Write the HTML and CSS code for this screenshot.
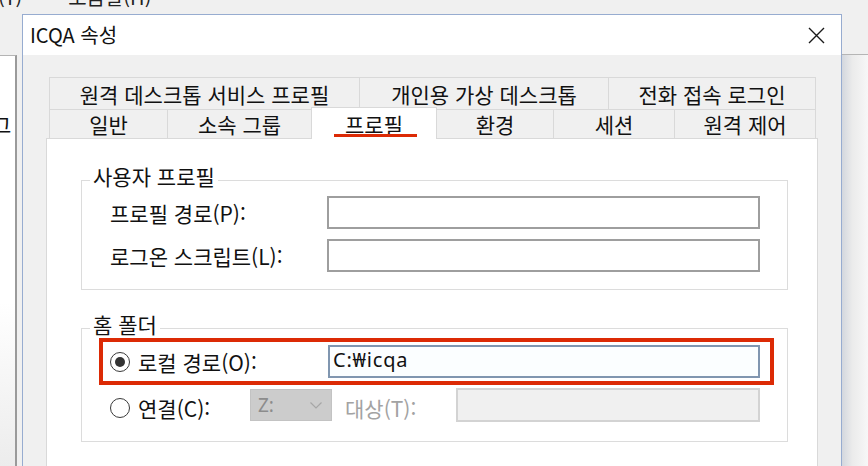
FILE: index.html
```html
<!DOCTYPE html>
<html lang="ko">
<head>
    <meta charset="UTF-8">
    <meta name="viewport" content="width=device-width, initial-scale=1.0">
    <title>ICQA 속성</title>
    <link rel="stylesheet" href="styles.css">
</head>
<body>
    <!-- window behind the dialog -->
    <div class="bg-menu"><span class="bg-item first">(Y)</span><span class="bg-item">도움말(H)</span></div>
    <div class="bg-win"><span class="bg-char">그</span></div>
    <div class="bg-right"></div>

    <div class="dialog">
        <div class="titlebar">
            <span class="title">ICQA 속성</span>
            <svg class="close" width="17" height="17" viewBox="0 0 17 17">
                <path d="M1 1 L16 16 M16 1 L1 16" stroke="#1a1a1a" stroke-width="1.4" fill="none"/>
            </svg>
        </div>
        <div class="dlg-body">
            <div class="tabs">
                <div class="tab-row row-back">
                    <div class="tab">원격 데스크톱 서비스 프로필</div>
                    <div class="tab">개인용 가상 데스크톱</div>
                    <div class="tab">전화 접속 로그인</div>
                </div>
                <div class="tab-row row-front">
                    <div class="tab">일반</div>
                    <div class="tab">소속 그룹</div>
                    <div class="tab active">프로필<span class="mark-line"></span></div>
                    <div class="tab">환경</div>
                    <div class="tab">세션</div>
                    <div class="tab">원격 제어</div>
                </div>
            </div>

            <div class="panel">
                <div class="group group-profile">
                    <span class="legend">사용자 프로필</span>
                    <div class="form-grid">
                        <label class="lbl">프로필 경로(P):</label>
                        <div class="input"></div>
                        <label class="lbl">로그온 스크립트(L):</label>
                        <div class="input"></div>
                    </div>
                </div>

                <div class="group group-home">
                    <span class="legend">홈 폴더</span>
                    <div class="highlight">
                        <div class="radio-item">
                            <span class="radio checked"></span>
                            <span class="lbl">로컬 경로(O):</span>
                        </div>
                        <div class="input focused">C:₩icqa</div>
                    </div>
                    <div class="connect-row">
                        <div class="radio-item connect">
                            <span class="radio"></span>
                            <span class="lbl">연결(C):</span>
                        </div>
                        <div class="combo">
                            <span>Z:</span>
                            <svg width="12" height="7" viewBox="0 0 12 7">
                                <path d="M0.5 0.5 L6 6 L11.5 0.5" stroke="#a6a6a6" stroke-width="1.2" fill="none"/>
                            </svg>
                        </div>
                        <span class="lbl disabled target">대상(T):</span>
                        <div class="input disabled-input"></div>
                    </div>
                </div>
            </div>
        </div>
    </div>
</body>
</html>
```

FILE: styles.css
```css
body {
    margin: 0;
    width: 868px;
    height: 466px;
    overflow: hidden;
    position: relative;
    background: #f0f0f0;
    font-family: "Noto Sans CJK KR", "Noto Sans", sans-serif;
    font-size: 21px;
    color: #111;
}

/* stuff behind the dialog */
.bg-menu {
    position: absolute;
    top: -15px;
    left: 0;
    line-height: 24px;
    font-size: 20px;
    color: #222;
    white-space: nowrap;
}

.bg-item {
    margin-left: 46px;
}

.bg-item.first {
    margin-left: -2px;
}

.bg-win {
    position: absolute;
    left: 0;
    top: 55px;
    width: 15px;
    height: 411px;
    background: linear-gradient(#fff 60%, #ececec);
    border-top: 1px solid #b4b4b4;
    border-right: 2px solid #9a9a9a;
    overflow: hidden;
}

.bg-char {
    position: absolute;
    left: -8px;
    top: 56px;
    line-height: 24px;
}

.bg-right {
    position: absolute;
    left: 842px;
    top: 54px;
    width: 26px;
    height: 412px;
    border-top: 1px solid #b5b5b5;
    background: linear-gradient(to right, #d3d7de, #ebebeb 40%, #f7f7f7);
}

/* dialog */
.dialog {
    position: absolute;
    left: 22px;
    top: 14px;
    width: 818px;
    height: 480px;
    border: 1px solid #97acd0;
    background: #f0f0f0;
}

.titlebar {
    height: 40px;
    background: #fff;
    display: flex;
    align-items: center;
    justify-content: space-between;
    padding: 0 16px 0 7px;
}

.title {
    font-size: 20px;
    line-height: 24px;
}

.dlg-body {
    padding: 22px 0 0 23px;
}

.tabs {
    margin-left: 3px;
    width: 768px;
}

.tab-row {
    display: grid;
}

.row-back {
    grid-template-columns: 311px 249px 207px;
    height: 32px;
}

.row-front {
    grid-template-columns: 119px 144px 125px 117px 121px 141px;
    height: 29px;
}

.tab {
    border-top: 1px solid #d9d9d9;
    border-right: 1px solid #d9d9d9;
    display: flex;
    align-items: center;
    justify-content: center;
    white-space: nowrap;
    line-height: 24px;
}

.tab:first-child {
    border-left: 1px solid #d9d9d9;
}

.tab.active {
    position: relative;
    z-index: 1;
    background: #fff;
    border-left: 1px solid #d9d9d9;
    margin: -2px 0 -1px -1px;
}

.mark-line {
    position: absolute;
    left: 22px;
    bottom: 2px;
    width: 83px;
    height: 3px;
    background: #dc2a05;
}

.panel {
    width: 772px;
    height: 400px;
    box-sizing: border-box;
    background: #fff;
    border: 1px solid #d9d9d9;
    padding: 41px 0 0 34px;
}

/* group boxes */
.group {
    position: relative;
    border: 1px solid #dcdcdc;
}

.legend {
    position: absolute;
    top: -17px;
    left: 8px;
    padding: 0 3px;
    background: #fff;
    line-height: 24px;
}

.group-profile {
    padding: 15px 0 17px 28px;
    width: 677px;
}

.form-grid {
    display: grid;
    grid-template-columns: 217px 433px;
    grid-auto-rows: 33px;
    row-gap: 10px;
    align-items: center;
}

.lbl {
    line-height: 24px;
    white-space: nowrap;
}

.input {
    height: 33px;
    box-sizing: border-box;
    border: 2px solid #9e9e9e;
    background: #fff;
}

.input.focused {
    width: 432px;
    border-color: #8096b0;
    background: #fbfeff;
    font-family: "Noto Sans", sans-serif;
    font-size: 20px;
    letter-spacing: 0.8px;
    line-height: 26px;
    padding-left: 3px;
}

.group-home {
    margin-top: 38px;
    padding: 9px 0 19px 17px;
    width: 688px;
}

.highlight {
    width: 660px;
    height: 39px;
    border: 4px solid #dc2a05;
    padding-left: 7px;
    display: grid;
    grid-template-columns: 218px 432px;
    align-items: center;
}

.radio-item {
    display: flex;
    align-items: center;
    gap: 8px;
}

.radio {
    width: 20px;
    height: 20px;
    box-sizing: border-box;
    border: 1.5px solid #3a3a3a;
    border-radius: 50%;
    background: #fff;
    display: flex;
    align-items: center;
    justify-content: center;
}

.radio.checked::after {
    content: "";
    width: 10px;
    height: 10px;
    border-radius: 50%;
    background: #333;
}

.connect-row {
    margin-top: 3px;
    height: 34px;
    padding-left: 11px;
    display: flex;
    align-items: center;
}

.radio-item.connect {
    width: 140px;
    padding-top: 6px;
}

.combo {
    width: 82px;
    height: 32px;
    box-sizing: border-box;
    background: #cccccc;
    border: 1px solid #c3c3c3;
    display: flex;
    align-items: center;
    justify-content: space-between;
    padding: 0 9px 0 7px;
    color: #8c8c8c;
    font-family: "Noto Sans", sans-serif;
    font-size: 19px;
}

.lbl.disabled {
    color: #a3a3a3;
}

.target {
    width: 98px;
    margin-left: 13px;
    padding-top: 6px;
    padding-right: 13px;
}

.disabled-input {
    width: 304px;
    height: 34px;
    background: #f0f0f0;
    border-color: #d3d3d3;
}
```
